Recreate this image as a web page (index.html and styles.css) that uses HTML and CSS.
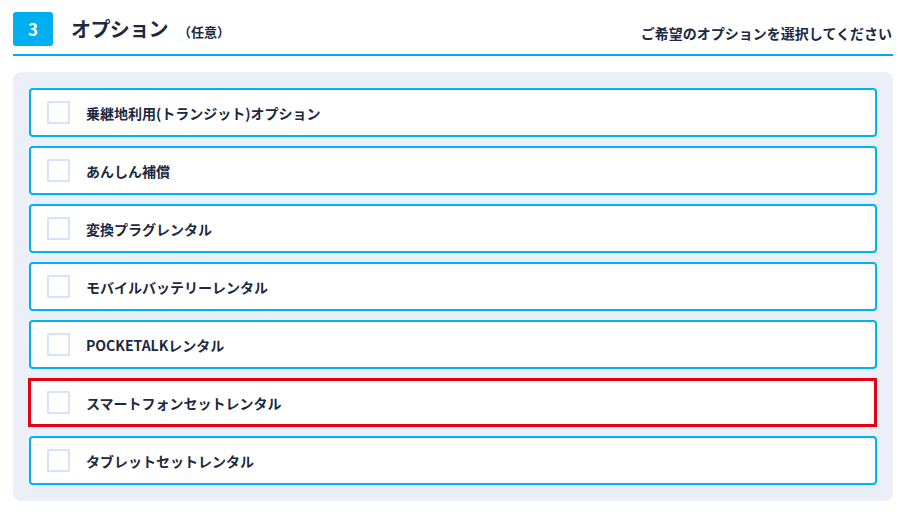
FILE: index.html
```html
<!DOCTYPE html>
<html lang="ja">
<head>
<meta charset="utf-8">
<title>オプション</title>
<link rel="stylesheet" href="styles.css">
</head>
<body>
<div class="page">
  <header class="head">
    <div class="head-left">
      <span class="badge">3</span>
      <h2 class="title">オプション<small>（任意）</small></h2>
    </div>
    <p class="note">ご希望のオプションを選択してください</p>
  </header>
  <div class="panel">
    <label class="item"><span class="check"></span><span class="label">乗継地利用(トランジット)オプション</span></label>
    <label class="item"><span class="check"></span><span class="label">あんしん補償</span></label>
    <label class="item"><span class="check"></span><span class="label">変換プラグレンタル</span></label>
    <label class="item"><span class="check"></span><span class="label">モバイルバッテリーレンタル</span></label>
    <label class="item"><span class="check"></span><span class="label">POCKETALKレンタル</span></label>
    <label class="item item--marked"><span class="check"></span><span class="label">スマートフォンセットレンタル</span></label>
    <label class="item"><span class="check"></span><span class="label">タブレットセットレンタル</span></label>
  </div>
</div>
</body>
</html>
```
FILE: styles.css
```css
* { box-sizing: border-box; }
html, body { margin: 0; padding: 0; background: #fff; }
body {
  font-family: "Noto Sans CJK JP", "Noto Sans", sans-serif;
  color: #1b2a41;
}
.page { padding: 11px 16px 0 13px; }
.head {
  display: flex;
  justify-content: space-between;
  align-items: flex-end;
  padding-bottom: 8px;
  border-bottom: 2px solid #00aaf0;
}
.head-left { display: flex; align-items: center; }
.badge {
  width: 40px;
  height: 34px;
  border-radius: 3px;
  background: #00aff0;
  color: #fff;
  font-weight: 700;
  font-size: 17px;
  display: flex;
  align-items: center;
  justify-content: center;
  margin-right: 18px;
}
.title {
  margin: 0;
  padding-top: 4px;
  font-size: 20px;
  font-weight: 700;
  line-height: 28px;
  display: flex;
  align-items: baseline;
  letter-spacing: -0.6px;
}
.title small {
  font-size: 13px;
  margin-left: 10px;
  letter-spacing: 0;
}
.note {
  margin: 0;
  font-size: 14px;
  font-weight: 700;
  line-height: 20px;
  padding-bottom: 3px;
  padding-right: 1px;
}
.panel {
  margin-top: 16px;
  background: #ebf0f8;
  border-radius: 8px;
  padding: 16px 16px 16px;
  display: flex;
  flex-direction: column;
  gap: 9px;
}
.item {
  height: 49px;
  background: #fff;
  border: 2px solid #00b1f3;
  border-radius: 4px;
  display: flex;
  align-items: center;
  padding-left: 16px;
  gap: 16px;
}
.item--marked {
  border: 3px solid #e60012;
  border-radius: 0;
  margin-left: -1px;
  padding-left: 16px;
}
.check {
  width: 23px;
  height: 23px;
  border: 2px solid #d6e4fb;
  border-radius: 1px;
  flex: none;
}
.label {
  font-size: 14px;
  font-weight: 700;
}
```
